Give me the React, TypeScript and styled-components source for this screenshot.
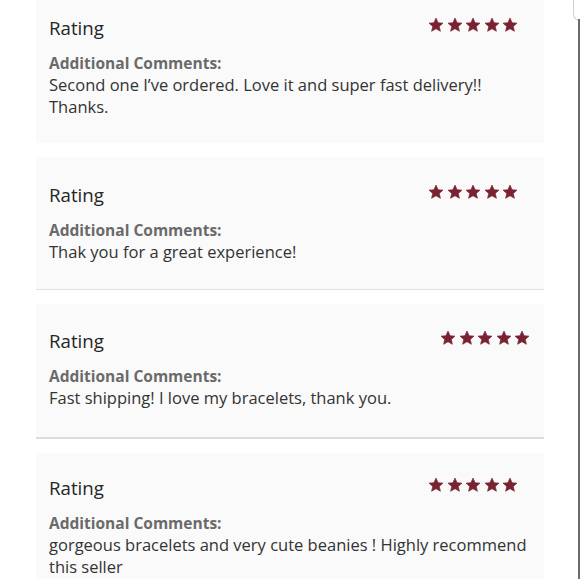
import React from 'react';
import styled, { createGlobalStyle } from 'styled-components';

const GlobalStyle = createGlobalStyle`
  html, body {
    margin: 0;
    padding: 0;
    background: #ffffff;
  }
  body {
    font-family: "Open Sans", Lato, "Liberation Sans", sans-serif;
    overflow: hidden;
  }
`;

type Review = {
  comment: string;
  padTop: number;
  padBottom: number;
  divider: 'none' | 'thin' | 'thick';
  starsShift: number;
};

const reviews: Review[] = [
  {
    comment: 'Second one I’ve ordered. Love it and super fast delivery!! Thanks.',
    padTop: 24,
    padBottom: 25,
    divider: 'none',
    starsShift: 0,
  },
  {
    comment: 'Thak you for a great experience!',
    padTop: 24,
    padBottom: 26,
    divider: 'thin',
    starsShift: 0,
  },
  {
    comment: 'Fast shipping! I love my bracelets, thank you.',
    padTop: 23,
    padBottom: 28,
    divider: 'thick',
    starsShift: 12,
  },
  {
    comment: 'gorgeous bracelets and very cute beanies ! Highly recommend this seller',
    padTop: 21,
    padBottom: 26,
    divider: 'none',
    starsShift: 0,
  },
];

const Page = styled.main`
  position: relative;
  width: 580px;
  height: 579px;
  overflow: hidden;
`;

const List = styled.section`
  display: flex;
  flex-direction: column;
  gap: 14px;
  width: 508px;
  margin: -10px 0 0 36px;
`;

const Card = styled.article<{
  $padTop: number;
  $padBottom: number;
  $divider: Review['divider'];
}>`
  background: #fafafa;
  padding: ${(p) => p.$padTop}px 13px ${(p) => p.$padBottom}px 13px;
  border-bottom: ${(p) =>
    p.$divider === 'thin'
      ? '1px solid #e2e2e2'
      : p.$divider === 'thick'
        ? '2px solid #dcdcdc'
        : 'none'};
`;

const Header = styled.div`
  display: flex;
  justify-content: space-between;
  align-items: flex-start;
`;

const Title = styled.h3`
  margin: 0;
  font-size: 18.7px;
  line-height: 28px;
  font-weight: 400;
  color: #262626;
`;

const Stars = styled.div<{ $shift: number }>`
  display: flex;
  gap: 2.5px;
  margin-top: 3px;
  margin-right: ${(p) => 13 - p.$shift}px;
  color: #7a2232;
`;

const Label = styled.div`
  margin-top: 10px;
  font-size: 15.5px;
  line-height: 22px;
  font-weight: 700;
  color: #6a6a6a;
`;

const Comment = styled.p`
  margin: 0;
  font-size: 16.5px;
  line-height: 22px;
  color: #333333;
`;

const FrameCorner = styled.div`
  position: absolute;
  left: 573px;
  top: -12px;
  width: 12px;
  height: 32px;
  border-left: 1px solid #cfcfcf;
  border-bottom: 1px solid #cfcfcf;
  border-bottom-left-radius: 7px;
`;

const FrameEdge = styled.div`
  position: absolute;
  left: 578px;
  top: 19px;
  bottom: 0;
  width: 2px;
  background: #6b6b6b;
`;

function Star() {
  return (
    <svg width="16" height="16" viewBox="0 0 24 24" fill="currentColor">
      <path
        d="M12 1.6l3.1 6.9 7.4.7-5.6 4.9 1.7 7.3L12 17.6l-6.6 3.8 1.7-7.3L1.5 9.2l7.4-.7z"
        strokeLinejoin="round"
        stroke="currentColor"
        strokeWidth="1"
      />
    </svg>
  );
}

export default function App() {
  return (
    <Page>
      <GlobalStyle />
      <List>
        {reviews.map((r, i) => (
          <Card
            key={i}
            $padTop={r.padTop}
            $padBottom={r.padBottom}
            $divider={r.divider}
          >
            <Header>
              <Title>Rating</Title>
              <Stars $shift={r.starsShift}>
                {[0, 1, 2, 3, 4].map((s) => (
                  <Star key={s} />
                ))}
              </Stars>
            </Header>
            <Label>Additional Comments:</Label>
            <Comment>{r.comment}</Comment>
          </Card>
        ))}
      </List>
      <FrameCorner />
      <FrameEdge />
    </Page>
  );
}
